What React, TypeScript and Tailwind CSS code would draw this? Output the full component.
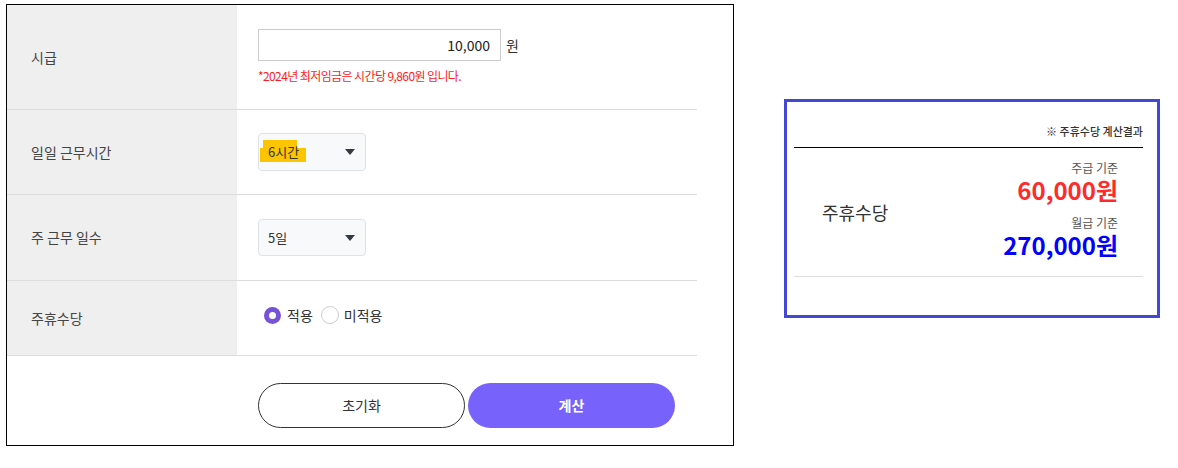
import React from "react";

const font = { fontFamily: '"Noto Sans CJK KR", "Noto Sans", sans-serif' };

function Caret() {
  return (
    <svg width="10" height="6" viewBox="0 0 10 6" className="absolute right-[10px] top-1/2 -translate-y-1/2">
      <polygon points="0,0 10,0 5,6" fill="#343a40" />
    </svg>
  );
}

function Row({ label, h, children }: { label: string; h: string; children: React.ReactNode }) {
  return (
    <div className={`flex border-b border-[#dddddd] ${h}`}>
      <div className="w-[230px] shrink-0 bg-[#efefef] pl-[24px] flex items-center text-[14px] text-[#444]">{label}</div>
      <div className="flex-1 pl-[21px] flex flex-col justify-center">{children}</div>
    </div>
  );
}

export default function App() {
  return (
    <div className="w-[1178px] h-[468px] bg-white flex items-start pt-[4px] pl-[6px]" style={font}>
      <div className="w-[728px] h-[442px] border border-black">
        <div className="w-[690px]">
          <div className="flex border-b border-[#dddddd] h-[105px]">
            <div className="w-[230px] shrink-0 bg-[#efefef] pl-[24px] flex items-center text-[14px] text-[#444]">시급</div>
            <div className="flex-1 pl-[21px] pt-[24px]">
              <div className="flex items-center">
                <div className="w-[243px] h-[32px] border border-[#cccccc] flex items-center justify-end pr-[10px] text-[14px] text-[#222]">10,000</div>
                <span className="ml-[5px] text-[14px] text-[#333]">원</span>
              </div>
              <div className="mt-[7px] text-[12px] leading-[16px] text-[#ff1a1a] tracking-[-0.6px]">*2024년 최저임금은 시간당 9,860원 입니다.</div>
            </div>
          </div>
          <Row label="일일 근무시간" h="h-[85px]">
            <div className="relative w-[108px] h-[38px] rounded-[4px] border border-[#dee2e6] bg-[#f8f9fa] text-[13px] text-[#333]">
              <div className="absolute left-[4px] top-[6px] w-[34px] h-[22px] bg-[#fcc500]" />
              <div className="absolute left-[1px] top-[14px] w-[46px] h-[14px] bg-[#fcc500]" />
              <span className="absolute left-[9px] top-1/2 -translate-y-1/2">6시간</span>
              <Caret />
            </div>
          </Row>
          <Row label="주 근무 일수" h="h-[86px]">
            <div className="relative w-[108px] h-[37px] rounded-[4px] border border-[#dee2e6] bg-[#f8f9fa] text-[13px] text-[#333]">
              <span className="absolute left-[9px] top-1/2 -translate-y-1/2">5일</span>
              <Caret />
            </div>
          </Row>
          <Row label="주휴수당" h="h-[75px]">
            <div className="flex items-center text-[14px] text-[#333] -mt-[6px] pl-[6px]">
              <span className="w-[17px] h-[17px] rounded-full bg-[#7552d6] flex items-center justify-center">
                <span className="w-[7px] h-[7px] rounded-full bg-white" />
              </span>
              <span className="ml-[6px]">적용</span>
              <span className="ml-[8px] w-[18px] h-[18px] rounded-full border border-[#cccccc] bg-white" />
              <span className="ml-[5px]">미적용</span>
            </div>
          </Row>
        </div>
        <div className="flex pl-[251px] mt-[27px] gap-[3px]">
          <button className="w-[207px] h-[45px] rounded-full border border-[#333] bg-white text-[14px] text-[#333]">초기화</button>
          <button className="w-[207px] h-[45px] rounded-full bg-[#7763fb] text-[14px] font-bold text-white">계산</button>
        </div>
      </div>
      <div className="ml-[50px] mt-[95px] w-[376px] h-[219px] border-[3px] border-[#4348d4] pl-[7px] pr-[14px]">
        <div className="h-[45px] flex items-end justify-end pb-[8px] text-[11px] font-medium text-[#333]">※ 주휴수당 계산결과</div>
        <div className="border-t border-black" />
        <div className="flex items-center justify-between h-[129px] border-b border-[#dddddd] pl-[28px] pr-[25px]">
          <div className="text-[18px] text-[#333]">주휴수당</div>
          <div className="self-start pt-[12px] flex flex-col items-end">
            <div className="text-[12px] leading-[16px] text-[#555]">주급 기준</div>
            <div className="text-[24px] leading-[28px] font-bold text-[#ff2b2b]">60,000원</div>
            <div className="mt-[11px] text-[12px] leading-[16px] text-[#555]">월급 기준</div>
            <div className="text-[24px] leading-[28px] font-bold text-[#0000ff]">270,000원</div>
          </div>
        </div>
      </div>
    </div>
  );
}
